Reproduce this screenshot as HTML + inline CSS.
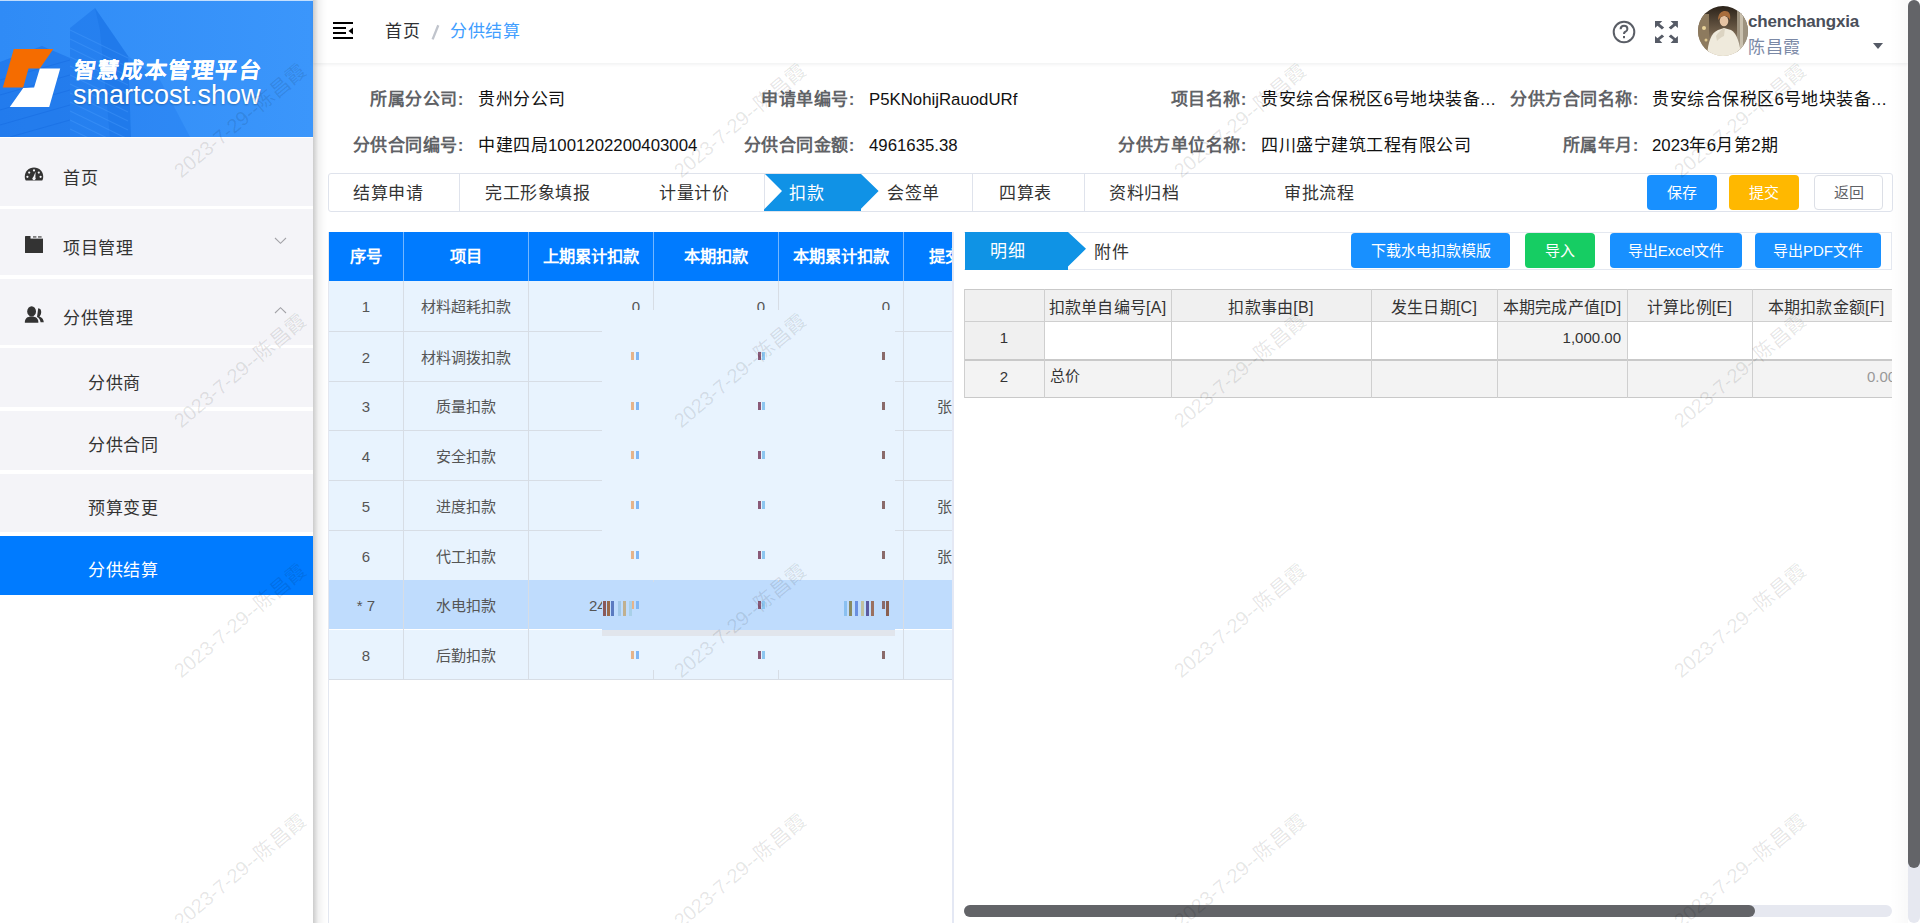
<!DOCTYPE html>
<html lang="zh-CN">
<head>
<meta charset="utf-8">
<style>
*{box-sizing:border-box;margin:0;padding:0}
html,body{width:1920px;height:923px;overflow:hidden;background:#fff;font-family:"Liberation Sans",sans-serif;color:#333}
.a{position:absolute}
.t{position:absolute;white-space:nowrap;line-height:20px}
/* sidebar */
#logo{position:absolute;left:0;top:0;width:313px;height:137px;background:#3390f8;overflow:hidden}
.mi{position:absolute;left:0;width:313px;background:#f4f4f8}
.mt{position:absolute;font-size:17px;letter-spacing:.5px;line-height:20px;color:#333;white-space:nowrap}
#sideShadow{position:absolute;left:313px;top:0;width:15px;height:923px;background:linear-gradient(90deg,rgba(0,0,0,.2),rgba(0,0,0,.06) 35%,rgba(0,0,0,.015) 70%,rgba(0,0,0,0))}
/* header */
#hdr{position:absolute;left:313px;top:0;width:1595px;height:63px;background:#fff;box-shadow:0 1px 4px rgba(0,21,41,.08)}
/* info */
.lb{position:absolute;font-size:17px;letter-spacing:.5px;font-weight:bold;color:#606266;white-space:nowrap;line-height:20px;text-align:right}
.vl{position:absolute;font-size:17px;letter-spacing:.5px;color:#111;white-space:nowrap;line-height:20px}
.lat{font-size:16.8px;letter-spacing:0}
.btn{position:absolute;border-radius:4px;color:#fff;font-size:15px;line-height:35px;text-align:center;white-space:nowrap}
/* tabs */
.tab{position:absolute;font-size:17px;letter-spacing:.5px;line-height:20px;color:#333;white-space:nowrap}
.vd{position:absolute;width:1px;background:#dfe3ec}
/* left table */
#lp{position:absolute;left:328px;top:232px;width:626px;height:700px;border-left:1px solid #e2e6f0;border-right:2px solid #e4e8f4;overflow:hidden}
.lh{position:absolute;top:0;height:49px;background:#007bff;color:#fff;font-weight:bold;font-size:16.25px;line-height:49px;text-align:center;white-space:nowrap;overflow:hidden}
.lc{position:absolute;font-size:15px;color:#555;line-height:17px;white-space:nowrap;text-align:center}
/* right table */
.rh{position:absolute;font-size:15px;color:#333;line-height:17px;white-space:nowrap}
.wm{position:absolute;font-size:20px;color:rgba(0,0,0,.1);white-space:nowrap;transform:rotate(-40deg);transform-origin:center center;line-height:20px}
</style>
</head>
<body>
<!-- SIDEBAR -->
<div id="logo">
  <svg class="a" style="left:0;top:0" width="313" height="137" viewBox="0 0 313 137">
    <defs><linearGradient id="lg1" x1="0" y1="0" x2="1" y2="0"><stop offset="0" stop-color="#2f8bf6"/><stop offset="1" stop-color="#3b96fb"/></linearGradient></defs>
    <rect width="313" height="137" fill="url(#lg1)"/>
    <polygon points="70,137 70,28 95,8 128,56 131,137" fill="#1b74ea" opacity=".55"/>
    <polygon points="0,137 0,62 42,46 70,58 70,137" fill="#156ce4" opacity=".5"/>
    <polygon points="128,56 160,80 190,137 131,137" fill="#1b74ea" opacity=".3"/>
    <polygon points="95,8 128,56 131,137 110,137 100,30" fill="#0f66dc" opacity=".25"/>
    <g stroke="#4da0ff" stroke-width="1.2" opacity=".35" fill="none"><path d="M70 30 L128 58"/><path d="M70 39 L128 67"/><path d="M70 48 L128 76"/><path d="M70 57 L128 85"/><path d="M70 66 L128 94"/><path d="M70 75 L128 103"/><path d="M70 84 L128 112"/><path d="M70 93 L128 121"/><path d="M70 102 L128 130"/><path d="M70 111 L128 139"/><path d="M70 120 L128 148"/><path d="M70 129 L128 157"/></g>
    <g stroke="#0c5fd6" stroke-width="1" opacity=".3" fill="none"><path d="M0 80 L70 60 M0 95 L70 75 M0 110 L70 90 M0 125 L70 105 M10 137 L70 120"/></g>
    <polygon fill="#f56c00" points="13.8,48.9 53.3,48.9 39.8,68.5 28.5,68.5 23.2,87.6 2.8,87.6"/>
    <polygon fill="#ffffff" points="39.8,68.5 60.2,68.5 49.2,107 9.8,107 23.2,88 34.1,87.6"/>
  </svg>
  <div class="t" style="left:72px;top:59px;font-size:22px;line-height:24px;font-weight:bold;color:#fff;letter-spacing:1.6px;transform:skewX(-8deg);transform-origin:left bottom;text-shadow:0 0 .6px #fff">智慧成本管理平台</div>
  <div class="t" style="left:73px;top:80px;font-size:27px;line-height:30px;color:#fff;text-shadow:0 1px 2px rgba(0,0,0,.25)">smartcost.show</div>
</div>
<div class="a" style="left:0;top:137px;width:313px;height:1px;background:#fff"></div>
<div class="a" style="left:0;top:0;width:313px;height:1px;background:rgba(255,255,255,.7)"></div>
<div class="mi" style="top:138px;height:68px"></div>
<div class="mi" style="top:209px;height:66px"></div>
<div class="mi" style="top:279px;height:66px"></div>
<div class="mi" style="top:348px;height:59px"></div>
<div class="mi" style="top:411px;height:59px"></div>
<div class="mi" style="top:474px;height:58px"></div>
<div class="a" style="left:0;top:536px;width:313px;height:59px;background:#007bff"></div>
<div class="mt" style="left:63px;top:169px">首页</div>
<div class="mt" style="left:63px;top:239px">项目管理</div>
<div class="mt" style="left:63px;top:309px">分供管理</div>
<div class="mt" style="left:88px;top:374px">分供商</div>
<div class="mt" style="left:88px;top:436px">分供合同</div>
<div class="mt" style="left:88px;top:499px">预算变更</div>
<div class="mt" style="left:88px;top:561px;color:#fff">分供结算</div>
<!-- sidebar icons -->
<svg class="a" style="left:24px;top:167px" width="20" height="15" viewBox="0 0 20 15">
  <path d="M10 0.6 C4.6 0.6 0.8 4.6 0.8 9.6 C0.8 11.2 1.1 12.6 1.8 13.6 L18.2 13.6 C18.9 12.6 19.2 11.2 19.2 9.6 C19.2 4.6 15.4 0.6 10 0.6 Z" fill="#333"/>
  <circle cx="10" cy="3.4" r="1.1" fill="#f4f4f8"/><circle cx="5.2" cy="5.6" r="1.1" fill="#f4f4f8"/><circle cx="14.8" cy="5.6" r="1.1" fill="#f4f4f8"/><circle cx="3.4" cy="9.8" r="1.1" fill="#f4f4f8"/><circle cx="16.6" cy="9.8" r="1.1" fill="#f4f4f8"/>
  <path d="M8.7 11.6 L11.6 4.8 L11.3 11.9 Z" fill="#f4f4f8"/><circle cx="10" cy="11.6" r="1.6" fill="#f4f4f8"/>
</svg>
<svg class="a" style="left:25px;top:236px" width="18" height="17" viewBox="0 0 18 17">
  <rect x="0" y="0" width="18" height="17" rx="0.6" fill="#333"/>
  <rect x="5.5" y="0" width="12.5" height="2.6" fill="#f4f4f8"/>
  <rect x="8" y="0.4" width="3.4" height="1.1" fill="#333"/>
  <rect x="13" y="0.4" width="3.6" height="1.1" fill="#333"/>
</svg>
<svg class="a" style="left:24px;top:306px" width="20" height="17" viewBox="0 0 20 17">
  <path d="M14.2 2.2 C16.6 2.2 17.4 4.4 17.2 6.6 C17 8.6 16.2 10 15.3 10.6 C18.4 11.6 19.6 13.8 19.8 16.3 L16.6 16.3 C16.2 13.6 15 12 13 11 Z" fill="#333"/>
  <rect x="11.8" y="9.6" width="6" height="7.2" fill="#f4f4f8" transform="rotate(40 13 11)" opacity="0"/>
  <path d="M14.4 16.8 C14.2 13.2 12.6 11.6 10.2 10.8 L10.6 10 L15.8 16.8 Z" fill="#f4f4f8"/>
  <ellipse cx="7.6" cy="5.4" rx="4.4" ry="5.2" fill="#333"/>
  <path d="M0.8 16.8 C0.8 12.6 3 10.6 7.6 10.6 C12.2 10.6 14.4 12.6 14.4 16.8 Z" fill="#333"/>
</svg>
<svg class="a" style="left:274px;top:237px" width="13" height="8" viewBox="0 0 13 8"><path d="M1 1 L6.5 6.3 L12 1" stroke="#a3a3a8" stroke-width="1.1" fill="none"/></svg>
<svg class="a" style="left:274px;top:306px" width="13" height="8" viewBox="0 0 13 8"><path d="M1 7 L6.5 1.7 L12 7" stroke="#a3a3a8" stroke-width="1.1" fill="none"/></svg>

<!-- HEADER -->
<div id="hdr"></div>
<div id="sideShadow"></div>
<svg class="a" style="left:333px;top:21px" width="21" height="19" viewBox="0 0 21 19">
  <rect x="0" y="1" width="20" height="2" fill="#000"/>
  <rect x="0" y="6" width="13" height="2" fill="#000"/>
  <rect x="0" y="11" width="13" height="2" fill="#000"/>
  <rect x="0" y="16" width="20" height="2" fill="#000"/>
  <path d="M15.5 10 L20 6.5 L20 13.5 Z" fill="#000"/>
</svg>
<div class="t" style="left:385px;top:22px;font-size:17px;letter-spacing:.5px;color:#303133">首页</div>
<svg class="a" style="left:428px;top:22px" width="16" height="20" viewBox="0 0 16 20"><path d="M10.3 3.2 L4.6 17.4" stroke="#c0c4cc" stroke-width="2.3"/></svg>
<div class="t" style="left:450px;top:22px;font-size:17px;letter-spacing:.5px;color:#409eff">分供结算</div>
<svg class="a" style="left:1612px;top:20px" width="24" height="24" viewBox="0 0 24 24">
  <circle cx="12" cy="12" r="10.3" stroke="#5a5e66" stroke-width="2" fill="none"/>
  <path d="M8.6 9.3 Q8.6 5.8 12 5.8 Q15.4 5.8 15.4 9 Q15.4 11 13 12 Q12 12.5 12 14" stroke="#5a5e66" stroke-width="2" fill="none"/>
  <rect x="11" y="16" width="2" height="2.2" fill="#5a5e66"/>
</svg>
<svg class="a" style="left:1655px;top:21px" width="23" height="22" viewBox="0 0 23 22"><g fill="#565b66"><polygon points="0.00,0.00 7.30,0.00 4.50,2.80 9.20,6.40 6.90,8.50 2.50,4.70 0.00,6.90"/><polygon points="0.00,21.90 7.30,21.90 4.50,19.10 9.20,15.50 6.90,13.40 2.50,17.20 0.00,15.00"/><polygon points="22.90,0.00 15.60,0.00 18.40,2.80 13.70,6.40 16.00,8.50 20.40,4.70 22.90,6.90"/><polygon points="22.90,21.90 15.60,21.90 18.40,19.10 13.70,15.50 16.00,13.40 20.40,17.20 22.90,15.00"/></g></svg>
<svg class="a" style="left:1698px;top:6px" width="50" height="50" viewBox="0 0 50 50">
  <defs><clipPath id="av"><circle cx="25" cy="25" r="25"/></clipPath>
  <linearGradient id="avg" x1="0" y1="0" x2="0" y2="1"><stop offset="0" stop-color="#2b2219"/><stop offset=".5" stop-color="#6e5d49"/><stop offset="1" stop-color="#bfb096"/></linearGradient></defs>
  <g clip-path="url(#av)">
    <rect width="50" height="50" fill="url(#avg)"/>
    <rect x="0" y="8" width="11" height="42" fill="#8d7a5e"/>
    <rect x="39" y="0" width="11" height="50" fill="#9d927f"/>
    <rect x="42" y="0" width="3" height="50" fill="#c9c0ae"/>
    <circle cx="6" cy="22" r="2" fill="#e9d39a"/><circle cx="8" cy="34" r="1.5" fill="#e0c890"/>
    <path d="M9 50 C10 36 13 27 20 24 L26 22 L33 24 C39 27 42 38 43 50 Z" fill="#efeadc"/>
    <path d="M18 30 C20 26 24 23 27 22 L26 30 C23 31 21 33 19 35 Z" fill="#dcd4c2"/>
    <ellipse cx="26" cy="15" rx="4.3" ry="5.2" fill="#e6c4a4"/>
    <path d="M20 14 C20 7 24 5 27 5 C31 5 33 8 32 14 C30 10 27 9 23 11 Z" fill="#a86d3c"/>
  </g>
</svg>
<div class="t" style="left:1748px;top:12px;font-size:17px;font-weight:bold;color:#4a4f5a;letter-spacing:-0.2px">chenchangxia</div>
<div class="t" style="left:1748px;top:38px;font-size:17px;letter-spacing:.5px;color:#7b89a6">陈昌霞</div>
<svg class="a" style="left:1873px;top:43px" width="10" height="6" viewBox="0 0 10 6"><path d="M0 0 L10 0 L5 6 Z" fill="#555a66"/></svg>

<!-- INFO -->
<div class="lb" style="right:1456px;top:90px">所属分公司:</div>
<div class="vl" style="left:478px;top:90px">贵州分公司</div>
<div class="lb" style="right:1065px;top:90px">申请单编号:</div>
<div class="vl" style="left:869px;top:90px"><span class="lat">P5KNohijRauodURf</span></div>
<div class="lb" style="right:673px;top:90px">项目名称:</div>
<div class="vl" style="left:1261px;top:90px">贵安综合保税区<span class="lat">6</span>号地块装备...</div>
<div class="lb" style="right:281px;top:90px">分供方合同名称:</div>
<div class="vl" style="left:1652px;top:90px">贵安综合保税区<span class="lat">6</span>号地块装备...</div>

<div class="lb" style="right:1456px;top:136px">分供合同编号:</div>
<div class="vl" style="left:478px;top:136px">中建四局<span class="lat">1001202200403004</span></div>
<div class="lb" style="right:1065px;top:136px">分供合同金额:</div>
<div class="vl" style="left:869px;top:136px"><span class="lat">4961635.38</span></div>
<div class="lb" style="right:673px;top:136px">分供方单位名称:</div>
<div class="vl" style="left:1261px;top:136px">四川盛宁建筑工程有限公司</div>
<div class="lb" style="right:281px;top:136px">所属年月:</div>
<div class="vl" style="left:1652px;top:136px"><span class="lat">2023</span>年<span class="lat">6</span>月第<span class="lat">2</span>期</div>

<!-- TABS -->
<div class="a" style="left:328px;top:173px;width:1565px;height:39px;border:1px solid #dfe3ec;border-radius:3px"></div>
<div class="vd" style="left:459px;top:174px;height:37px"></div>
<div class="vd" style="left:764px;top:174px;height:37px"></div>
<div class="vd" style="left:972px;top:174px;height:37px"></div>
<div class="vd" style="left:1084px;top:174px;height:37px"></div>
<svg class="a" style="left:764px;top:174px" width="115" height="37" viewBox="0 0 115 37"><polygon points="1,0 97,0 114.6,17 97,34.8 97,37 0,37 0,35.6 18,17" fill="#1092e6"/></svg>
<div class="tab" style="left:353px;top:184px">结算申请</div>
<div class="tab" style="left:485px;top:184px">完工形象填报</div>
<div class="tab" style="left:659px;top:184px">计量计价</div>
<div class="tab" style="left:789px;top:184px;color:#fff">扣款</div>
<div class="tab" style="left:887px;top:184px">会签单</div>
<div class="tab" style="left:999px;top:184px">四算表</div>
<div class="tab" style="left:1109px;top:184px">资料归档</div>
<div class="tab" style="left:1284px;top:184px">审批流程</div>
<div class="btn" style="left:1647px;top:175px;width:70px;height:35px;background:#1890ff">保存</div>
<div class="btn" style="left:1729px;top:175px;width:70px;height:35px;background:#ffb800">提交</div>
<div class="btn" style="left:1814px;top:175px;width:69px;height:35px;background:#fff;border:1px solid #dcdfe6;color:#606266;line-height:33px">返回</div>

<!--LEFTPANEL-->
<div class="a" style="left:328px;top:232px;width:1px;height:691px;background:#e3e7f0"></div>
<div class="a" style="left:952px;top:232px;width:2px;height:691px;background:#e4e8f4"></div>
<div class="a" style="left:329px;top:232px;width:623px;height:691px;overflow:hidden">
<div class="lh" style="left:0px;width:74px">序号</div>
<div class="lh" style="left:74px;width:125px">项目</div>
<div class="lh" style="left:199px;width:125px">上期累计扣款</div>
<div class="lh" style="left:324px;width:125px">本期扣款</div>
<div class="lh" style="left:449px;width:125px">本期累计扣款</div>
<div class="lh" style="left:574px;width:100px">提交人</div>
<div class="a" style="left:74px;top:0;width:1px;height:49px;background:rgba(255,255,255,.45)"></div>
<div class="a" style="left:199px;top:0;width:1px;height:49px;background:rgba(255,255,255,.45)"></div>
<div class="a" style="left:324px;top:0;width:1px;height:49px;background:rgba(255,255,255,.45)"></div>
<div class="a" style="left:449px;top:0;width:1px;height:49px;background:rgba(255,255,255,.45)"></div>
<div class="a" style="left:574px;top:0;width:1px;height:49px;background:rgba(255,255,255,.45)"></div>
<div class="a" style="left:0;top:49px;width:623px;height:51px;background:#e8f3fe"></div>
<div class="a" style="left:0;top:99px;width:623px;height:1px;background:#d7dde5"></div>
<div class="lc" style="left:0;width:74px;top:66.0px">1</div>
<div class="lc" style="left:74px;width:125px;top:66.0px">材料超耗扣款</div>
<div class="a" style="left:0;top:100px;width:623px;height:50px;background:#e8f3fe"></div>
<div class="a" style="left:0;top:149px;width:623px;height:1px;background:#d7dde5"></div>
<div class="lc" style="left:0;width:74px;top:116.5px">2</div>
<div class="lc" style="left:74px;width:125px;top:116.5px">材料调拨扣款</div>
<div class="a" style="left:0;top:150px;width:623px;height:49px;background:#e8f3fe"></div>
<div class="a" style="left:0;top:198px;width:623px;height:1px;background:#d7dde5"></div>
<div class="lc" style="left:0;width:74px;top:166.0px">3</div>
<div class="lc" style="left:74px;width:125px;top:166.0px">质量扣款</div>
<div class="a" style="left:0;top:199px;width:623px;height:50px;background:#e8f3fe"></div>
<div class="a" style="left:0;top:248px;width:623px;height:1px;background:#d7dde5"></div>
<div class="lc" style="left:0;width:74px;top:215.5px">4</div>
<div class="lc" style="left:74px;width:125px;top:215.5px">安全扣款</div>
<div class="a" style="left:0;top:249px;width:623px;height:50px;background:#e8f3fe"></div>
<div class="a" style="left:0;top:298px;width:623px;height:1px;background:#d7dde5"></div>
<div class="lc" style="left:0;width:74px;top:265.5px">5</div>
<div class="lc" style="left:74px;width:125px;top:265.5px">进度扣款</div>
<div class="a" style="left:0;top:299px;width:623px;height:50px;background:#e8f3fe"></div>
<div class="a" style="left:0;top:348px;width:623px;height:1px;background:#d7dde5"></div>
<div class="lc" style="left:0;width:74px;top:315.5px">6</div>
<div class="lc" style="left:74px;width:125px;top:315.5px">代工扣款</div>
<div class="a" style="left:0;top:348px;width:623px;height:49px;background:#bfdcfd"></div>
<div class="lc" style="left:0;width:74px;top:365.0px">* 7</div>
<div class="lc" style="left:74px;width:125px;top:365.0px">水电扣款</div>
<div class="a" style="left:0;top:398px;width:623px;height:50px;background:#e8f3fe"></div>
<div class="a" style="left:0;top:447px;width:623px;height:1px;background:#d7dde5"></div>
<div class="lc" style="left:0;width:74px;top:414.5px">8</div>
<div class="lc" style="left:74px;width:125px;top:414.5px">后勤扣款</div>
<div class="a" style="left:74px;top:49px;width:1px;height:398px;background:#d7dde5"></div>
<div class="a" style="left:199px;top:49px;width:1px;height:398px;background:#d7dde5"></div>
<div class="a" style="left:324px;top:49px;width:1px;height:398px;background:#d7dde5"></div>
<div class="a" style="left:449px;top:49px;width:1px;height:398px;background:#d7dde5"></div>
<div class="a" style="left:574px;top:49px;width:1px;height:398px;background:#d7dde5"></div>
<div class="lc" style="left:271px;width:40px;text-align:right;top:66px">0</div>
<div class="lc" style="left:396px;width:40px;text-align:right;top:66px">0</div>
<div class="lc" style="left:521px;width:40px;text-align:right;top:66px">0</div>
<div class="lc" style="left:608px;top:166.0px;text-align:left">张</div>
<div class="lc" style="left:608px;top:265.5px;text-align:left">张</div>
<div class="lc" style="left:608px;top:315.5px;text-align:left">张</div>
<div class="lc" style="left:260px;top:364.5px;text-align:left">24</div>
<div class="a" style="left:273px;top:78px;width:293px;height:270px;background:#e8f3fe"></div>
<div class="a" style="left:273px;top:350px;width:293px;height:48px;background:#bfdcfd"></div>
<div class="a" style="left:273px;top:398px;width:293px;height:6px;background:#e1e5ec"></div>
<div class="a" style="left:273px;top:404px;width:293px;height:42px;background:#e8f3fe"></div>
<div class="a" style="left:324px;top:438px;width:1px;height:9px;background:#d7dde5"></div>
<div class="a" style="left:449px;top:438px;width:1px;height:9px;background:#d7dde5"></div>
<div class="a" style="left:302px;top:120px;width:3px;height:8px;background:#e6b48a"></div>
<div class="a" style="left:307px;top:120px;width:3px;height:8px;background:#7fb6f4"></div>
<div class="a" style="left:429px;top:120px;width:3px;height:8px;background:#8a5a78"></div>
<div class="a" style="left:433px;top:120px;width:3px;height:8px;background:#8cc6f0"></div>
<div class="a" style="left:553px;top:120px;width:3px;height:8px;background:#8a6a6a"></div>
<div class="a" style="left:302px;top:170px;width:3px;height:8px;background:#e6b48a"></div>
<div class="a" style="left:307px;top:170px;width:3px;height:8px;background:#7fb6f4"></div>
<div class="a" style="left:429px;top:170px;width:3px;height:8px;background:#8a5a78"></div>
<div class="a" style="left:433px;top:170px;width:3px;height:8px;background:#8cc6f0"></div>
<div class="a" style="left:553px;top:170px;width:3px;height:8px;background:#8a6a6a"></div>
<div class="a" style="left:302px;top:219px;width:3px;height:8px;background:#e6b48a"></div>
<div class="a" style="left:307px;top:219px;width:3px;height:8px;background:#7fb6f4"></div>
<div class="a" style="left:429px;top:219px;width:3px;height:8px;background:#8a5a78"></div>
<div class="a" style="left:433px;top:219px;width:3px;height:8px;background:#8cc6f0"></div>
<div class="a" style="left:553px;top:219px;width:3px;height:8px;background:#8a6a6a"></div>
<div class="a" style="left:302px;top:269px;width:3px;height:8px;background:#e6b48a"></div>
<div class="a" style="left:307px;top:269px;width:3px;height:8px;background:#7fb6f4"></div>
<div class="a" style="left:429px;top:269px;width:3px;height:8px;background:#8a5a78"></div>
<div class="a" style="left:433px;top:269px;width:3px;height:8px;background:#8cc6f0"></div>
<div class="a" style="left:553px;top:269px;width:3px;height:8px;background:#8a6a6a"></div>
<div class="a" style="left:302px;top:319px;width:3px;height:8px;background:#e6b48a"></div>
<div class="a" style="left:307px;top:319px;width:3px;height:8px;background:#7fb6f4"></div>
<div class="a" style="left:429px;top:319px;width:3px;height:8px;background:#8a5a78"></div>
<div class="a" style="left:433px;top:319px;width:3px;height:8px;background:#8cc6f0"></div>
<div class="a" style="left:553px;top:319px;width:3px;height:8px;background:#8a6a6a"></div>
<div class="a" style="left:302px;top:369px;width:3px;height:8px;background:#e6b48a"></div>
<div class="a" style="left:307px;top:369px;width:3px;height:8px;background:#7fb6f4"></div>
<div class="a" style="left:429px;top:369px;width:3px;height:8px;background:#8a5a78"></div>
<div class="a" style="left:433px;top:369px;width:3px;height:8px;background:#8cc6f0"></div>
<div class="a" style="left:553px;top:369px;width:3px;height:8px;background:#8a6a6a"></div>
<div class="a" style="left:302px;top:419px;width:3px;height:8px;background:#e6b48a"></div>
<div class="a" style="left:307px;top:419px;width:3px;height:8px;background:#7fb6f4"></div>
<div class="a" style="left:429px;top:419px;width:3px;height:8px;background:#8a5a78"></div>
<div class="a" style="left:433px;top:419px;width:3px;height:8px;background:#8cc6f0"></div>
<div class="a" style="left:553px;top:419px;width:3px;height:8px;background:#8a6a6a"></div>
<div class="a" style="left:274px;top:369px;width:3px;height:15px;background:#8a5a5a"></div>
<div class="a" style="left:278px;top:369px;width:3px;height:15px;background:#9a6a4a"></div>
<div class="a" style="left:282px;top:369px;width:3px;height:15px;background:#5a7ac0"></div>
<div class="a" style="left:289px;top:369px;width:3px;height:15px;background:#a0c8e8"></div>
<div class="a" style="left:294px;top:369px;width:3px;height:15px;background:#c0b090"></div>
<div class="a" style="left:300px;top:369px;width:3px;height:15px;background:#a8d0e8"></div>
<div class="a" style="left:515px;top:369px;width:3px;height:15px;background:#8ac0f0"></div>
<div class="a" style="left:520px;top:369px;width:3px;height:15px;background:#8a8a60"></div>
<div class="a" style="left:526px;top:369px;width:3px;height:15px;background:#6a90e0"></div>
<div class="a" style="left:532px;top:369px;width:3px;height:15px;background:#c0c0a0"></div>
<div class="a" style="left:537px;top:369px;width:3px;height:15px;background:#5a5aa0"></div>
<div class="a" style="left:542px;top:369px;width:3px;height:15px;background:#9a7060"></div>
<div class="a" style="left:557px;top:369px;width:3px;height:15px;background:#8a6050"></div>
</div>
<!--/LEFTPANEL-->
<!--RIGHTPANEL-->
<div class="a" style="left:964px;top:232px;width:928px;height:38px;border:1px solid #e4e8f0;border-left:none"></div>
<svg class="a" style="left:965px;top:232px" width="122" height="38" viewBox="0 0 122 38"><polygon points="0,0 103,0 121,16.8 103,34.6 103,38 0,38" fill="#0f93e5"/></svg>
<div class="tab" style="left:990px;top:242px;color:#fff">明细</div>
<div class="tab" style="left:1094px;top:243px">附件</div>
<div class="btn" style="left:1351px;top:233px;width:159px;height:35px;background:#1890ff">下载水电扣款模版</div>
<div class="btn" style="left:1525px;top:233px;width:70px;height:35px;background:#16cd63">导入</div>
<div class="btn" style="left:1610px;top:233px;width:132px;height:35px;background:#1890ff">导出Excel文件</div>
<div class="btn" style="left:1755px;top:233px;width:126px;height:35px;background:#1890ff">导出PDF文件</div>
<div class="a" style="left:964px;top:289px;width:928px;height:110px;overflow:hidden">
<div class="a" style="left:0;top:0;width:940px;height:32px;background:#f0f0f0"></div>
<div class="a" style="left:0;top:32px;width:940px;height:38px;background:#fff"></div>
<div class="a" style="left:0;top:32px;width:80px;height:38px;background:#f0f0f0"></div>
<div class="a" style="left:533px;top:32px;width:130px;height:38px;background:#f3f3f3"></div>
<div class="a" style="left:0;top:70px;width:940px;height:39px;background:#f3f3f3"></div>
<div class="a" style="left:0;top:0;width:940px;height:1px;background:#c9c9c9"></div>
<div class="a" style="left:0;top:32px;width:940px;height:1px;background:#cfcfcf"></div>
<div class="a" style="left:0;top:70px;width:940px;height:2px;background:#c9c9c9"></div>
<div class="a" style="left:0;top:108px;width:940px;height:1px;background:#c9c9c9"></div>
<div class="a" style="left:0px;top:0;width:1px;height:109px;background:#cfcfcf"></div>
<div class="a" style="left:80px;top:0;width:1px;height:109px;background:#cfcfcf"></div>
<div class="a" style="left:207px;top:0;width:1px;height:109px;background:#cfcfcf"></div>
<div class="a" style="left:407px;top:0;width:1px;height:109px;background:#cfcfcf"></div>
<div class="a" style="left:533px;top:0;width:1px;height:109px;background:#cfcfcf"></div>
<div class="a" style="left:663px;top:0;width:1px;height:109px;background:#cfcfcf"></div>
<div class="a" style="left:788px;top:0;width:1px;height:109px;background:#cfcfcf"></div>
<div class="rh" style="left:80px;width:127px;top:10px;text-align:center;font-size:16px;letter-spacing:.25px">扣款单自编号[A]</div>
<div class="rh" style="left:207px;width:200px;top:10px;text-align:center;font-size:16px;letter-spacing:.25px">扣款事由[B]</div>
<div class="rh" style="left:407px;width:126px;top:10px;text-align:center;font-size:16px;letter-spacing:.25px">发生日期[C]</div>
<div class="rh" style="left:533px;width:130px;top:10px;text-align:center;font-size:16px;letter-spacing:.25px">本期完成产值[D]</div>
<div class="rh" style="left:663px;width:125px;top:10px;text-align:center;font-size:16px;letter-spacing:.25px">计算比例[E]</div>
<div class="rh" style="left:788px;width:148px;top:10px;text-align:center;font-size:16px;letter-spacing:.25px">本期扣款金额[F]</div>
<div class="rh" style="left:0;width:80px;top:40px;text-align:center">1</div>
<div class="rh" style="left:0;width:80px;top:79px;text-align:center">2</div>
<div class="rh" style="left:533px;width:124px;top:40px;text-align:right">1,000.00</div>
<div class="rh" style="left:86px;top:78px">总价</div>
<div class="rh" style="left:903px;top:79px;color:#999">0.00</div>
</div>
<!--/RIGHTPANEL-->
<!--OVERLAY-->
<div class="a" style="left:1890px;top:0;width:18px;height:923px;background:linear-gradient(90deg,rgba(0,0,0,0),rgba(0,0,0,.025))"></div>
<div class="a" style="left:964px;top:905px;width:928px;height:12px;border-radius:6px;background:#e6e8f0"></div>
<div class="a" style="left:964px;top:905px;width:791px;height:12px;border-radius:6px;background:#636468"></div>
<div class="a" style="left:1908px;top:0;width:12px;height:923px;border-radius:6px;background:#e6e8f0"></div>
<div class="a" style="left:1908px;top:0;width:12px;height:868px;border-radius:6px;background:#636468"></div>
<div class="wm" style="left:158px;top:112px;width:160px;text-align:center">2023-7-29--陈昌霞</div>
<div class="wm" style="left:158px;top:362px;width:160px;text-align:center">2023-7-29--陈昌霞</div>
<div class="wm" style="left:158px;top:612px;width:160px;text-align:center">2023-7-29--陈昌霞</div>
<div class="wm" style="left:158px;top:862px;width:160px;text-align:center">2023-7-29--陈昌霞</div>
<div class="wm" style="left:658px;top:112px;width:160px;text-align:center">2023-7-29--陈昌霞</div>
<div class="wm" style="left:658px;top:362px;width:160px;text-align:center">2023-7-29--陈昌霞</div>
<div class="wm" style="left:658px;top:612px;width:160px;text-align:center">2023-7-29--陈昌霞</div>
<div class="wm" style="left:658px;top:862px;width:160px;text-align:center">2023-7-29--陈昌霞</div>
<div class="wm" style="left:1158px;top:112px;width:160px;text-align:center">2023-7-29--陈昌霞</div>
<div class="wm" style="left:1158px;top:362px;width:160px;text-align:center">2023-7-29--陈昌霞</div>
<div class="wm" style="left:1158px;top:612px;width:160px;text-align:center">2023-7-29--陈昌霞</div>
<div class="wm" style="left:1158px;top:862px;width:160px;text-align:center">2023-7-29--陈昌霞</div>
<div class="wm" style="left:1658px;top:112px;width:160px;text-align:center">2023-7-29--陈昌霞</div>
<div class="wm" style="left:1658px;top:362px;width:160px;text-align:center">2023-7-29--陈昌霞</div>
<div class="wm" style="left:1658px;top:612px;width:160px;text-align:center">2023-7-29--陈昌霞</div>
<div class="wm" style="left:1658px;top:862px;width:160px;text-align:center">2023-7-29--陈昌霞</div>
<!--/OVERLAY-->
</body>
</html>
